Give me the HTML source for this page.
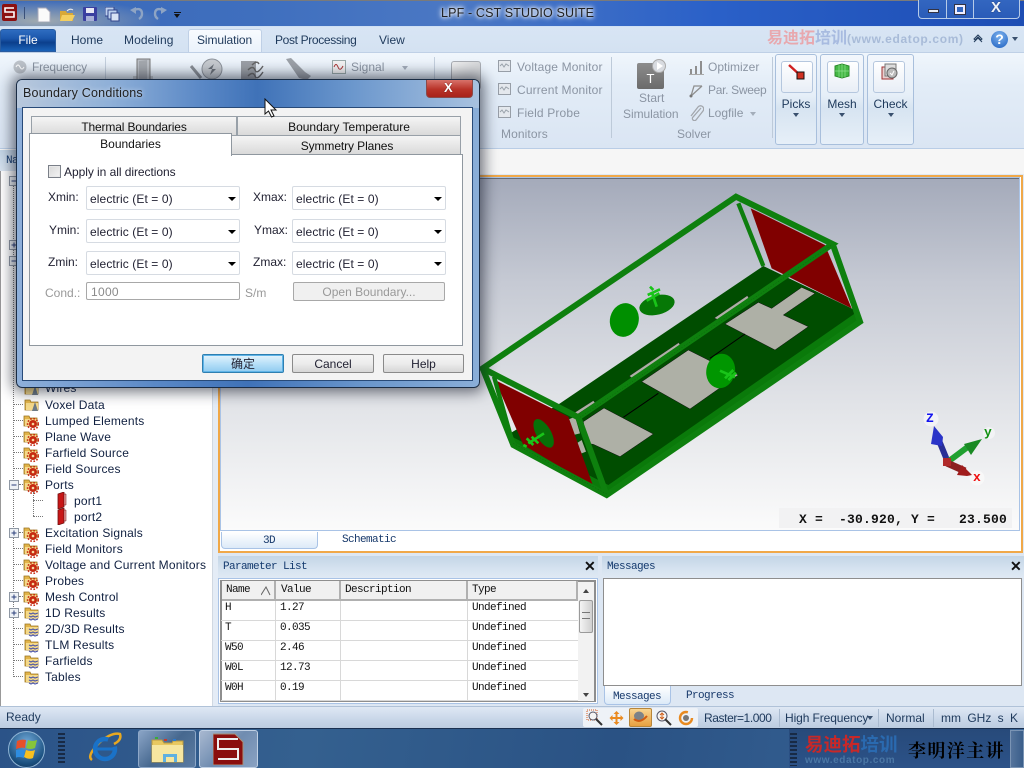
<!DOCTYPE html>
<html><head><meta charset="utf-8"><style>
html,body{margin:0;padding:0;width:1024px;height:768px;overflow:hidden;background:#fff}
body{position:relative;font-family:"Liberation Sans","Noto Sans CJK SC",sans-serif;font-size:12px;color:#111}
div,span,svg{position:absolute;box-sizing:border-box}
.t{white-space:nowrap;line-height:14px}
.g{color:#8b95a3}
.n{color:#1e395b}
.m{font-family:"Liberation Mono",monospace;font-size:11px;letter-spacing:-.6px;white-space:nowrap;line-height:12px}
.tr{white-space:nowrap;line-height:14px;left:45px;color:#102040;letter-spacing:.18px}
.cb{width:154px;height:24px;background:#fff;border:1px solid #d6dbe2;border-radius:2px}
.cb span{left:3px;top:5px;white-space:nowrap;line-height:14px;letter-spacing:.1px;color:#223}
.cb i{position:absolute;right:3px;top:10px;width:0;height:0;border:4px solid transparent;border-top:4px solid #000}
.btn{height:19px;border:1px solid #8a8a8a;border-radius:2px;background:linear-gradient(#f4f4f4,#ececec 50%,#d6d6d6);text-align:center;line-height:19px;color:#223}
.tab{border:1px solid #98a0a8;background:linear-gradient(#f5f5f5,#d8d8d8);text-align:center;color:#111;line-height:20px}
.rb{border:1px solid #a8bfdc;border-radius:3px;background:linear-gradient(#f3f7fc,#e6eff8 45%,#d7e4f1 60%,#e6eff8);top:54px;height:91px}
.rb b{position:absolute;left:5px;top:6px;width:30px;height:30px;border:1px solid #b5c7de;border-radius:3px;background:linear-gradient(#fff,#e8eef6)}
.rb span{left:0;right:0;top:42px;text-align:center;color:#1e395b;line-height:14px}
.rb i{position:absolute;left:50%;margin-left:-3px;top:58px;border:3px solid transparent;border-top:4px solid #39506e}
.hd{background:linear-gradient(#c3d5e6,#d6e3f0 60%,#dfe9f4);height:22px;top:556px}
.th{top:581px;height:20px;background:#f0f0f0;border-right:2px solid #b0b0b0;border-bottom:2px solid #b0b0b0}
.l{height:1px;background:#d8d8d8;left:221px;width:357px}
.v{width:1px;background:#d8d8d8;top:601px;height:100px}
</style></head><body>
<svg width="0" height="0" style="left:0;top:0"><defs>
<g id="fo"><path d="M1 3h5l1 2h7v8H1z" fill="#e2b44a" stroke="#9a7420" stroke-width=".8"/><path d="M2 6h12v7H2z" fill="#f4d98a"/></g>
<g id="ge"><use href="#fo"/><circle cx="10" cy="11" r="4" fill="#c62a12"/><circle cx="10" cy="11" r="5.4" fill="none" stroke="#c62a12" stroke-width="1.6" stroke-dasharray="1.6 1.6"/><circle cx="10" cy="11" r="1.3" fill="#f6d9a0"/></g>
<g id="wa"><use href="#fo"/><path d="M5 8l2 1 2-1 2 1 3-1M5 11l2 1 2-1 2 1 3-1M5 14l2 1 2-1 2 1 3-1" fill="none" stroke="#4a55a8" stroke-width="1.1"/></g>
<g id="co"><use href="#fo"/><path d="M11 5l3 9H8z" fill="#6c7a86"/></g>
<g id="po"><path d="M1 2l6-2v15l-6 2z" fill="#c81616" stroke="#701010" stroke-width=".8"/><path d="M7 2h2v11H7z" fill="#e9a0a0" stroke="#701010" stroke-width=".5"/></g>
<g id="px"><rect x=".5" y=".5" width="9" height="9" fill="#eef2f6" stroke="#8f98a4"/><path d="M2.500 5h5M5 2.500v5" stroke="#2a3f7a"/></g>
<g id="mn"><rect x=".5" y=".5" width="9" height="9" fill="#eef2f6" stroke="#8f98a4"/><path d="M2.500 5h5" stroke="#2a3f7a"/></g>
<g id="mon"><rect x=".5" y=".5" width="12" height="11" fill="#e4e8ed" stroke="#979ea7"/><path d="M2 6l2-2 2 3 2-3 3 2" fill="none" stroke="#9aa2ab"/></g>
</defs></svg>

<!-- Title bar -->
<div style="left:0;top:0;width:1024px;height:27px;background:linear-gradient(90deg,#3a68b8,#3f6fbe 25%,#4b78c4 45%,#2a60c8 70%,#1d4db4 100%);border-top:1px solid #7a7a7a;border-bottom:1px solid #cfe0f4"></div>
<div style="left:0;top:1px;width:160px;height:25px;background:radial-gradient(ellipse at 40px 20px,#a0aab0,rgba(90,130,190,0) 75%)"></div>
<svg style="left:2px;top:4px" width="15" height="17"><rect width="15" height="17" rx="2" fill="#8c1010"/><path d="M12 4H3v4h9v5H3" fill="none" stroke="#fff" stroke-width="1.6"/></svg>
<div style="left:24px;top:7px;width:1px;height:12px;background:#39507a"></div>
<svg style="left:37px;top:7px" width="14" height="15"><path d="M1 1h8l4 4v10H1z" fill="#fafafa" stroke="#aab"/></svg>
<svg style="left:59px;top:7px" width="17" height="15"><path d="M1 4h6l1 2h6v8H1z" fill="#d8a838"/><path d="M3 8h13l-3 6H1z" fill="#f4cf60"/><path d="M8 4q3-3 6-1" fill="none" stroke="#eee"/></svg>
<svg style="left:83px;top:7px" width="15" height="15"><rect width="14" height="14" rx="1" fill="#3a3fa0"/><rect x="3" y="1" width="8" height="5" fill="#e8e8f4"/><rect x="3" y="9" width="8" height="5" fill="#a8b0d8"/></svg>
<svg style="left:105px;top:7px" width="15" height="15"><rect x="0" y="0" width="9" height="9" fill="#bcd0ee" stroke="#33468c"/><rect x="3" y="3" width="9" height="9" fill="#bcd0ee" stroke="#33468c"/><rect x="6" y="6" width="8" height="8" fill="#d8e2f4" stroke="#33468c"/></svg>
<svg style="left:130px;top:6px" width="14" height="14"><path d="M4 4q8-3 8 4q0 3-3 5" fill="none" stroke="#8ea4c4" stroke-width="2.400"/><path d="M0 4l6-3v7z" fill="#8ea4c4"/></svg>
<svg style="left:153px;top:6px" width="14" height="14"><path d="M10 4q-8-3-8 4q0 3 3 5" fill="none" stroke="#8ea4c4" stroke-width="2.400"/><path d="M14 4L8 1v7z" fill="#8ea4c4"/></svg>
<div style="left:174px;top:12px;width:7px;height:1px;background:#111"></div>
<div style="left:174px;top:14px;border:3.500px solid transparent;border-top:4px solid #111"></div>
<div class="t" style="left:441px;top:6px;font-size:12.500px;color:#222;letter-spacing:.15px;text-shadow:0 0 6px #fff,0 0 6px #fff,0 0 3px #fff">LPF - CST STUDIO SUITE</div>
<div style="left:918px;top:0;width:102px;height:19px;border:1px solid #b6cbe8;border-top:0;border-radius:0 0 4px 4px;background:linear-gradient(#3366c0,#2a5cb8)"></div>
<div style="left:946px;top:0;width:1px;height:18px;background:#b6cbe8"></div><div style="left:973px;top:0;width:1px;height:18px;background:#b6cbe8"></div>
<div style="left:928px;top:9px;width:11px;height:4px;background:#e8eef8;border:1px solid #334"></div>
<div style="left:955px;top:5px;width:10px;height:9px;border:2px solid #eef;outline:1px solid #334;background:#3366c0"></div>
<div class="t" style="left:991px;top:1px;font-size:15px;font-weight:bold;color:#eef3fb;text-shadow:0 0 1px #223">X</div>

<!-- Tabs row -->
<div style="left:0;top:27px;width:1024px;height:25px;background:linear-gradient(#d8e5f4,#d4e2f2)"></div>
<div style="left:0;top:29px;width:56px;height:23px;background:linear-gradient(#2e6cc0,#1b57ac 40%,#0b3f8c 60%,#1a62b8);border:1px solid #2a5ca0;border-radius:3px 3px 0 0;color:#fff;text-align:center;line-height:21px">File</div>
<div class="t n" style="left:71px;top:33px">Home</div>
<div class="t n" style="left:124px;top:33px;letter-spacing:.1px">Modeling</div>
<div style="left:188px;top:29px;width:74px;height:24px;background:linear-gradient(#f8fbff,#eaf2fb);border:1px solid #bfd0e6;border-bottom:0;border-radius:3px 3px 0 0"></div>
<div class="t n" style="left:197px;top:33px;letter-spacing:-.1px">Simulation</div>
<div class="t n" style="left:275px;top:33px;letter-spacing:-.35px">Post Processing</div>
<div class="t n" style="left:379px;top:33px">View</div>
<div class="t" style="left:767px;top:30px;font-size:16px;font-weight:bold;color:#e8a8ae;line-height:18px;letter-spacing:0">易迪拓<span style="position:static;color:#a8bbe0">培训</span><span style="position:static;font-size:12px;color:#a8bbd8;letter-spacing:.65px">(www.edatop.com)</span></div>
<svg style="left:972px;top:33px" width="12" height="12"><path d="M2 6l4-4 4 4-1 1-3-3-3 3zM2 9l4-4 4 4" fill="none" stroke="#27405f"/></svg>
<div style="left:991px;top:31px;width:17px;height:17px;border-radius:50%;background:radial-gradient(circle at 50% 30%,#7db2ee,#1d5fc0);color:#fff;font-weight:bold;font-size:14px;line-height:17px;text-align:center">?</div>
<div style="left:1012px;top:37px;border:3px solid transparent;border-top:4px solid #39506e"></div>

<!-- Ribbon -->
<div style="left:0;top:52px;width:1024px;height:97px;background:linear-gradient(#f0f6fc,#e2ecf7 35%,#dae5f3);border-top:1px solid #bfd0e6;border-bottom:1px solid #b9cde6"></div>
<svg style="left:13px;top:60px" width="14" height="14"><circle cx="7" cy="7" r="6.500" fill="#bcc2c9"/><path d="M3 7q2-4 4 0t4 0" fill="none" stroke="#fff"/></svg>
<div class="t g" style="left:32px;top:60px;letter-spacing:-.2px">Frequency</div>
<div style="left:105px;top:57px;width:1px;height:22px;background:#c3cfdd"></div>
<svg style="left:132px;top:58px" width="22" height="22"><path d="M1 18h20v4H1z" fill="#c6cad0"/><path d="M5 1h13v21H5z" fill="#bcc0c6" stroke="#777"/><path d="M7 3l8-1v20l-8-1z" fill="#a4a8ae"/></svg>
<svg style="left:190px;top:58px" width="36" height="22"><circle cx="22" cy="11" r="10" fill="#c6cacf" stroke="#8c929a"/><path d="M1 8l10 12" stroke="#8a8f96" stroke-width="3"/><path d="M18 11l6-5-2 5 4 0-6 6 2-6z" fill="#6a7078"/></svg>
<svg style="left:240px;top:58px" width="28" height="22"><path d="M1 3h15v19H1z" fill="#9b9fa5"/><path d="M8 12q5-5 7 0t8-4M8 18q5-5 7 0t8-4M12 7q5-5 7-1" fill="none" stroke="#666" stroke-width="1.400"/></svg>
<svg style="left:285px;top:58px" width="26" height="22"><path d="M1 1l5-1 14 14 6 4-4 4-8-2z" fill="#9ca1a8"/></svg>
<svg style="left:332px;top:60px" width="14" height="14"><rect x=".5" y=".5" width="13" height="13" fill="#f3f3f3" stroke="#9aa"/><path d="M2 7q2-5 4 0t5-1" fill="none" stroke="#a33"/></svg>
<div class="t g" style="left:351px;top:60px">Signal</div>
<div style="left:402px;top:66px;border:3px solid transparent;border-top:4px solid #a3adba"></div>
<div style="left:434px;top:57px;width:1px;height:22px;background:#c3cfdd"></div>
<div style="left:451px;top:61px;width:30px;height:29px;border:1px solid #a9adb3;border-radius:3px;background:linear-gradient(135deg,#f0f0f0,#bfc2c6)"></div>
<svg style="left:498px;top:60px" width="14" height="13"><use href="#mon"/></svg>
<svg style="left:498px;top:83px" width="14" height="13"><use href="#mon"/></svg>
<svg style="left:498px;top:106px" width="16" height="15"><use href="#mon"/></svg>
<div class="t g" style="left:517px;top:60px;letter-spacing:.15px">Voltage Monitor</div>
<div class="t g" style="left:517px;top:83px;letter-spacing:.15px">Current Monitor</div>
<div class="t g" style="left:517px;top:106px;letter-spacing:.15px">Field Probe</div>
<div class="t g" style="left:501px;top:127px;letter-spacing:.1px">Monitors</div>
<div style="left:611px;top:57px;width:1px;height:81px;background:#bdcad9"></div>
<div style="left:637px;top:63px;width:27px;height:26px;border-radius:2px;background:linear-gradient(#8c8c8c,#6b6b6b);color:#fff;font-size:13px;text-align:center;line-height:32px">T</div>
<div style="left:652px;top:59px;width:14px;height:14px;border-radius:50%;background:#d8dbe0;border:1px solid #aaa"></div>
<div style="left:657px;top:62px;border:4px solid transparent;border-left:6px solid #fff"></div>
<div class="t g" style="left:639px;top:91px">Start</div>
<div class="t g" style="left:623px;top:107px;letter-spacing:-.05px">Simulation</div>
<svg style="left:689px;top:60px" width="15" height="15"><path d="M1 14h2V9H1zM6 14h2V6H6zM11 14h2V1h-2z" fill="#8f8f8f"/><path d="M0 14.500h15" stroke="#aaa"/></svg>
<svg style="left:689px;top:83px" width="15" height="15"><path d="M2 13L5 3h8M2 13L13 3" fill="none" stroke="#8f8f8f" stroke-width="1.300"/><circle cx="2" cy="13" r="1.500" fill="#777"/></svg>
<svg style="left:689px;top:105px" width="15" height="16"><path d="M12 3L4 12a2 2 0 0 0 3 3l7-9a3 3 0 0 0-5-4L2 11" fill="none" stroke="#a3a7ad" stroke-width="1.300"/></svg>
<div class="t g" style="left:708px;top:60px">Optimizer</div>
<div class="t g" style="left:708px;top:83px;letter-spacing:-.3px">Par. Sweep</div>
<div class="t g" style="left:708px;top:106px">Logfile</div>
<div style="left:750px;top:112px;border:3px solid transparent;border-top:4px solid #a3adba"></div>
<div class="t g" style="left:677px;top:127px">Solver</div>
<div style="left:772px;top:57px;width:1px;height:81px;background:#bdcad9"></div>
<div class="rb" style="left:775px;width:42px"><b></b><span>Picks</span><i></i></div>
<div class="rb" style="left:820px;width:44px"><b style="left:6px"></b><span>Mesh</span><i></i></div>
<div class="rb" style="left:867px;width:47px"><b></b><span>Check</span><i></i></div>
<svg style="left:787px;top:64px" width="18" height="16"><path d="M2 1l12 11" stroke="#d02020" stroke-width="2.400"/><rect x="10" y="8" width="7" height="7" fill="#d03020" stroke="#111"/></svg>
<svg style="left:834px;top:63px" width="16" height="16"><path d="M1 3l7-2 7 2v10l-7 2-7-2z" fill="#45b845" stroke="#2a8a2a"/><path d="M8 1v14M1 8h14M5 2v12M11 2v12" stroke="#8ee08e" stroke-width=".7"/></svg>
<svg style="left:881px;top:62px" width="18" height="18"><rect x="1" y="5" width="11" height="12" fill="#e8d0d0" stroke="#a03030"/><rect x="4" y="2" width="11" height="12" fill="#ddd" stroke="#777"/><circle cx="11" cy="11" r="5" fill="#bbb" stroke="#666"/><path d="M9 11l2 2 2-4" fill="none" stroke="#fff"/></svg>

<!-- Strip under ribbon -->
<div style="left:0;top:149px;width:1024px;height:28px;background:#f6f6f6"></div>
<div style="left:0;top:150px;width:218px;height:23px;background:linear-gradient(#c3d5e6,#dbe6f2)"></div>
<div class="m" style="left:6px;top:155px;color:#143a6e">Navigation Tree</div>

<!-- Left tree -->
<div style="left:0;top:171px;width:218px;height:535px;background:#fff;border-left:1px solid #999"></div>
<div style="left:212px;top:171px;width:6px;height:535px;background:#e4ecf6;border-left:1px solid #d0d8e2"></div>
<div style="left:13px;top:180px;width:0;height:497px;border-left:1px dotted #777"></div>
<svg style="left:9px;top:176px" width="10" height="10"><use href="#mn"/></svg>
<svg style="left:9px;top:240px" width="10" height="10"><use href="#px"/></svg>
<svg style="left:9px;top:256px" width="10" height="10"><use href="#mn"/></svg>
<svg style="left:24px;top:381px" width="16" height="16"><use href="#co"/></svg><div class="tr" style="top:381px">Wires</div>
<svg style="left:24px;top:397px" width="16" height="16"><use href="#co"/></svg><div class="tr" style="top:398px">Voxel Data</div>
<svg style="left:23px;top:413px" width="16" height="18"><use href="#ge"/></svg><div class="tr" style="top:414px">Lumped Elements</div>
<svg style="left:23px;top:429px" width="16" height="18"><use href="#ge"/></svg><div class="tr" style="top:430px">Plane Wave</div>
<svg style="left:23px;top:445px" width="16" height="18"><use href="#ge"/></svg><div class="tr" style="top:446px">Farfield Source</div>
<svg style="left:23px;top:461px" width="16" height="18"><use href="#ge"/></svg><div class="tr" style="top:462px">Field Sources</div>
<svg style="left:23px;top:477px" width="16" height="18"><use href="#ge"/></svg><div class="tr" style="top:478px">Ports</div>
<svg style="left:9px;top:480px" width="10" height="10"><use href="#mn"/></svg>
<div style="left:33px;top:492px;width:0;height:24px;border-left:1px dotted #777"></div>
<div style="left:33px;top:500px;width:10px;height:0;border-top:1px dotted #777"></div>
<div style="left:33px;top:516px;width:10px;height:0;border-top:1px dotted #777"></div>
<svg style="left:57px;top:492px" width="11" height="17"><use href="#po"/></svg><div class="tr" style="left:74px;top:494px">port1</div>
<svg style="left:57px;top:508px" width="11" height="17"><use href="#po"/></svg><div class="tr" style="left:74px;top:510px">port2</div>
<svg style="left:23px;top:525px" width="16" height="18"><use href="#ge"/></svg><div class="tr" style="top:526px">Excitation Signals</div>
<svg style="left:9px;top:528px" width="10" height="10"><use href="#px"/></svg>
<svg style="left:23px;top:541px" width="16" height="18"><use href="#ge"/></svg><div class="tr" style="top:542px">Field Monitors</div>
<svg style="left:23px;top:557px" width="16" height="18"><use href="#ge"/></svg><div class="tr" style="top:558px">Voltage and Current Monitors</div>
<svg style="left:23px;top:573px" width="16" height="18"><use href="#ge"/></svg><div class="tr" style="top:574px">Probes</div>
<svg style="left:23px;top:589px" width="16" height="18"><use href="#ge"/></svg><div class="tr" style="top:590px">Mesh Control</div>
<svg style="left:9px;top:592px" width="10" height="10"><use href="#px"/></svg>
<svg style="left:24px;top:605px" width="16" height="17"><use href="#wa"/></svg><div class="tr" style="top:606px">1D Results</div>
<svg style="left:9px;top:608px" width="10" height="10"><use href="#px"/></svg>
<svg style="left:24px;top:621px" width="16" height="17"><use href="#wa"/></svg><div class="tr" style="top:622px">2D/3D Results</div>
<svg style="left:24px;top:637px" width="16" height="17"><use href="#wa"/></svg><div class="tr" style="top:638px">TLM Results</div>
<svg style="left:24px;top:653px" width="16" height="17"><use href="#wa"/></svg><div class="tr" style="top:654px">Farfields</div>
<svg style="left:24px;top:669px" width="16" height="17"><use href="#wa"/></svg><div class="tr" style="top:670px">Tables</div>
<div style="left:14px;top:404px;width:9px;border-top:1px dotted #777"></div><div style="left:14px;top:420px;width:9px;border-top:1px dotted #777"></div><div style="left:14px;top:436px;width:9px;border-top:1px dotted #777"></div><div style="left:14px;top:452px;width:9px;border-top:1px dotted #777"></div><div style="left:14px;top:468px;width:9px;border-top:1px dotted #777"></div><div style="left:19px;top:484px;width:4px;border-top:1px dotted #777"></div><div style="left:19px;top:532px;width:4px;border-top:1px dotted #777"></div><div style="left:14px;top:548px;width:9px;border-top:1px dotted #777"></div><div style="left:14px;top:564px;width:9px;border-top:1px dotted #777"></div><div style="left:14px;top:580px;width:9px;border-top:1px dotted #777"></div><div style="left:19px;top:596px;width:4px;border-top:1px dotted #777"></div><div style="left:19px;top:612px;width:4px;border-top:1px dotted #777"></div><div style="left:14px;top:628px;width:9px;border-top:1px dotted #777"></div><div style="left:14px;top:644px;width:9px;border-top:1px dotted #777"></div><div style="left:14px;top:660px;width:9px;border-top:1px dotted #777"></div><div style="left:14px;top:676px;width:9px;border-top:1px dotted #777"></div>

<!-- Viewport frame -->
<div style="left:218px;top:174px;width:806px;height:382px;background:#dfe9f4"></div>
<div style="left:218px;top:175px;width:805px;height:378px;border:2px solid #f0a848;background:#fff"></div>
<div style="left:220px;top:177px;width:800px;height:354px;border:1px solid #a9c3e6;background:linear-gradient(#a4aaba,#c6cad4 30%,#e2e4e8 65%,#fbfbfb)"></div>
<div style="left:221px;top:178px;width:798px;height:1px;background:#666c78"></div>

<!-- 3D model -->
<svg style="left:480px;top:180px" width="400" height="320" viewBox="0 0 1200 960">
<polygon points="240,670 850,258 1125,390 1130,420 385,925 95,795 90,760" fill="#004d00"/>
<polygon points="95,770 95,795 380,950 1145,425 1125,400 385,915" fill="#0a7a0a"/>
<polygon points="735,432 835,367 875,385 965,322 1005,340 910,405 985,440 885,510" fill="#aeb0a6" stroke="#111" stroke-width="1.500"/>
<polygon points="485,605 625,510 775,585 630,687" fill="#aeb0a6" stroke="#111" stroke-width="1.500"/>
<polygon points="310,725 372,684 520,762 420,830 340,793 320,790" fill="#aeb0a6" stroke="#111" stroke-width="1.500"/>
<polygon points="262,720 285,710 300,760 280,765" fill="#aeb0a6"/><polygon points="290,790 305,780 318,815 305,820" fill="#aeb0a6"/>
<polygon points="285,697 340,662 345,668 292,703" fill="#aeb0a6" stroke="#111"/>
<polygon points="448,588 596,488 600,494 456,594" fill="#aeb0a6" stroke="#111"/>
<polygon points="703,414 802,347 806,354 712,418" fill="#aeb0a6" stroke="#111"/>
<path d="M430,712L535,640M690,535L795,462" stroke="#000" stroke-width="3"/>
<polygon points="812,85 1035,195 1115,385 875,265" fill="#800000"/>
<polygon points="45,600 265,710 340,920 130,795" fill="#800000"/>
<ellipse cx="433" cy="420" rx="43" ry="51" transform="rotate(15 433 420)" fill="#008f00"/>
<ellipse cx="531" cy="375" rx="54" ry="29" transform="rotate(-14 531 375)" fill="#067806"/>
<ellipse cx="722" cy="573" rx="43" ry="52" transform="rotate(12 722 573)" fill="#009600"/>
<ellipse cx="191" cy="760" rx="22" ry="48" transform="rotate(-30 191 760)" fill="#087008"/>
<g stroke="#19c419" stroke-width="8" fill="none">
<path d="M515,335L530,380M503,345L540,328M500,362L538,340M510,320L520,330"/>
<path d="M720,572L765,592M735,595L760,570M745,600L768,578"/>
<path d="M145,790L192,760M140,775L160,795M155,770L175,790M130,795L140,800"/></g>
<g fill="none" stroke="#0e7e0e" stroke-width="13">
<path d="M42,590L97,785M775,70L850,258"/></g>
<g fill="none" stroke="#0e800e" stroke-width="18" stroke-linejoin="miter">
<path d="M8,565L768,50L1058,192L295,712Z"/>
<path d="M8,565L100,795L380,945L1140,425L1058,192"/>
<path d="M295,712L380,945"/>
</g>
<g fill="none" stroke="#0a4a0a" stroke-width="1.500" stroke-dasharray="4 5" opacity=".6">
<path d="M300,712L1055,195M100,790L380,942"/></g>
</svg>
<!-- triad -->
<svg style="left:905px;top:405px" width="90" height="90" viewBox="0 0 90 90">
<circle cx="26" cy="14" r="7.500" fill="#f2f3f5"/><circle cx="84" cy="28" r="6" fill="#f2f3f5"/><circle cx="72" cy="73" r="7.500" fill="#f8f8f8"/>
<path d="M42,55L33,33" stroke="#2a2f96" stroke-width="6"/><polygon points="29,21 38,32 37,41 26,39" fill="#2a34c8"/>
<path d="M44,56L64,41" stroke="#20a030" stroke-width="6"/><polygon points="77,34 59,39 66,50" fill="#1a8a24"/>
<path d="M42,58L60,66" stroke="#8c2020" stroke-width="7"/><polygon points="67,70 57,60 52,70 62,71" fill="#a01c1c"/>
<rect x="38" y="53" width="8" height="8" fill="#b02a2a"/>
</svg>
<div class="t" style="left:926px;top:412px;font-family:'Liberation Mono';font-size:13px;font-weight:bold;color:#1414f0">Z</div>
<div class="t" style="left:984px;top:426px;font-family:'Liberation Mono';font-size:13px;font-weight:bold;color:#109010">y</div>
<div class="t" style="left:973px;top:471px;font-family:'Liberation Mono';font-size:13px;font-weight:bold;color:#f01010">x</div>
<div style="left:779px;top:508px;width:233px;height:20px;background:#f2f2f3"></div>
<div class="t" style="left:799px;top:513px;font-family:'Liberation Mono';font-size:13px;font-weight:bold;white-space:pre;letter-spacing:.2px;color:#111">X =  -30.920, Y =   23.500</div>

<!-- 3D tab row -->
<div style="left:221px;top:532px;width:97px;height:17px;border:1px solid #a9c3e6;border-top:0;border-radius:0 0 4px 4px;background:linear-gradient(#fff,#dceaf8)"></div>
<div class="m" style="left:263px;top:535px;color:#17396b">3D</div>
<div class="m" style="left:342px;top:534px;color:#17396b">Schematic</div>

<!-- Parameter list -->
<div style="left:218px;top:553px;width:806px;height:153px;background:#dde7f3"></div>
<div class="hd" style="left:218px;width:380px"></div>
<div class="m" style="left:223px;top:561px;color:#143a6e">Parameter List</div>
<div class="t" style="left:584px;top:559px;font-size:14px;font-weight:bold;color:#111">✕</div>
<div style="left:218px;top:578px;width:380px;height:126px;border:1px solid #a9c3e6;background:#fff"></div>
<div style="left:220px;top:580px;width:376px;height:122px;border:2px solid #8e8e8e;background:#fff"></div>
<div class="th" style="left:222px;width:54px"></div><div class="th" style="left:276px;width:65px"></div><div class="th" style="left:341px;width:127px"></div><div class="th" style="left:468px;width:110px"></div>
<div class="m" style="left:226px;top:584px">Name</div><div class="m" style="left:281px;top:584px">Value</div><div class="m" style="left:345px;top:584px">Description</div><div class="m" style="left:472px;top:584px">Type</div>
<svg style="left:261px;top:586px" width="10" height="10"><path d="M0 9L5 1l4 8" fill="none" stroke="#666"/></svg>
<div class="l" style="top:620px"></div><div class="l" style="top:640px"></div><div class="l" style="top:660px"></div><div class="l" style="top:680px"></div><div class="l" style="top:700px"></div>
<div class="v" style="left:275px"></div><div class="v" style="left:340px"></div><div class="v" style="left:467px"></div>
<div class="m" style="left:225px;top:602px">H</div><div class="m" style="left:280px;top:602px">1.27</div><div class="m" style="left:472px;top:602px">Undefined</div>
<div class="m" style="left:225px;top:622px">T</div><div class="m" style="left:280px;top:622px">0.035</div><div class="m" style="left:472px;top:622px">Undefined</div>
<div class="m" style="left:225px;top:642px">W50</div><div class="m" style="left:280px;top:642px">2.46</div><div class="m" style="left:472px;top:642px">Undefined</div>
<div class="m" style="left:225px;top:662px">W0L</div><div class="m" style="left:280px;top:662px">12.73</div><div class="m" style="left:472px;top:662px">Undefined</div>
<div class="m" style="left:225px;top:682px">W0H</div><div class="m" style="left:280px;top:682px">0.19</div><div class="m" style="left:472px;top:682px">Undefined</div>
<div style="left:578px;top:582px;width:16px;height:119px;background:#f2f2f2"></div>
<div style="left:579px;top:600px;width:14px;height:33px;border:1px solid #9a9a9a;border-radius:2px;background:linear-gradient(90deg,#f4f4f4,#cfcfcf)"></div>
<div style="left:582px;top:612px;width:8px;height:7px;border-top:1px solid #777;border-bottom:1px solid #777"></div>
<div style="left:583px;top:586px;border:3.500px solid transparent;border-bottom:4px solid #444"></div>
<div style="left:583px;top:693px;border:3.500px solid transparent;border-top:4px solid #444"></div>

<!-- Messages -->
<div class="hd" style="left:602px;width:422px"></div>
<div style="left:598px;top:553px;width:4px;height:153px;background:#dde7f3"></div>
<div class="m" style="left:607px;top:561px;color:#143a6e">Messages</div>
<div class="t" style="left:1010px;top:559px;font-size:14px;font-weight:bold;color:#111">✕</div>
<div style="left:603px;top:578px;width:419px;height:108px;border:1px solid #8e8e8e;background:#fff"></div>
<div style="left:604px;top:686px;width:67px;height:19px;border:1px solid #a9c3e6;border-top:0;border-radius:0 0 4px 4px;background:linear-gradient(#fff,#dceaf8)"></div>
<div class="m" style="left:613px;top:691px;color:#17396b">Messages</div>
<div class="m" style="left:686px;top:690px;color:#17396b">Progress</div>

<!-- Status bar -->
<div style="left:0;top:706px;width:1024px;height:23px;background:linear-gradient(#dfe8f4,#c8d6e8 60%,#bccce0);border-top:1px solid #b0c2d8;border-bottom:1px solid #1a3050"></div>
<div class="t" style="left:6px;top:710px;color:#1e395b">Ready</div>
<div style="left:583px;top:708px;width:115px;height:19px;background:#eef2f7;border-radius:2px"></div>
<svg style="left:586px;top:709px" width="17" height="17"><rect x="1" y="1" width="10" height="10" fill="none" stroke="#d45a20" stroke-dasharray="1 1"/><circle cx="7" cy="7" r="4" fill="#f4f4f4" stroke="#556"/><path d="M10 10l6 6" stroke="#333" stroke-width="2"/></svg>
<svg style="left:608px;top:710px" width="17" height="16"><path d="M8.500 1l3 3h-2v3h3V5l3 3-3 3V9h-3v3h2l-3 3-3-3h2V9h-3v2l-3-3 3-3v2h3V4h-2z" fill="#ea8a20"/></svg>
<div style="left:629px;top:708px;width:23px;height:19px;background:linear-gradient(#f8d490,#e8a040);border:1px solid #b8863a;border-radius:2px"></div>
<svg style="left:632px;top:710px" width="17" height="15"><ellipse cx="7" cy="6" rx="5" ry="4.500" fill="#7d8288"/><path d="M2 9q6 5 13-3" fill="none" stroke="#d05a10" stroke-width="2"/></svg>
<svg style="left:655px;top:709px" width="17" height="17"><circle cx="7" cy="7" r="5" fill="#f6f6f6" stroke="#556"/><path d="M7 4v6M5 6l2-2 2 2M5 8l2 2 2-2" fill="none" stroke="#d0601a"/><path d="M10 10l6 6" stroke="#333" stroke-width="2"/></svg>
<svg style="left:678px;top:710px" width="17" height="16"><circle cx="8" cy="8" r="6" fill="none" stroke="#e88a20" stroke-width="2.400" stroke-dasharray="30 8"/><circle cx="8" cy="8" r="3" fill="#777"/></svg>
<div class="t n" style="left:704px;top:711px;letter-spacing:-.4px">Raster=1.000</div>
<div style="left:779px;top:709px;width:1px;height:18px;background:#aabbd0"></div>
<div class="t n" style="left:785px;top:711px;letter-spacing:-.1px">High Frequency</div>
<div style="left:867px;top:716px;border:3.500px solid transparent;border-top:4px solid #39506e"></div>
<div style="left:878px;top:709px;width:1px;height:18px;background:#aabbd0"></div>
<div class="t n" style="left:886px;top:711px">Normal</div>
<div style="left:933px;top:709px;width:1px;height:18px;background:#aabbd0"></div>
<div class="t n" style="left:941px;top:711px;word-spacing:3px">mm GHz s K</div>

<!-- Taskbar -->
<div style="left:0;top:729px;width:1024px;height:39px;background:linear-gradient(100deg,#2b5388,#34608f 30%,#2a5284 60%,#3a6698);"></div>
<div style="left:789px;top:729px;width:221px;height:39px;background:linear-gradient(#274a7a,#2c5288)"></div>
<div style="left:790px;top:733px;width:7px;height:33px;background:repeating-linear-gradient(#182a45 0 2px,rgba(0,0,0,0) 2px 4px)"></div>
<div style="left:58px;top:733px;width:7px;height:31px;background:repeating-linear-gradient(#182a45 0 2px,rgba(0,0,0,0) 2px 4px)"></div>
<div style="left:8px;top:731px;width:37px;height:37px;border-radius:50%;background:radial-gradient(circle at 50% 30%,#6fa8d8,#1a4f7e 70%,#0f2e50);border:1px solid #8fb4d4"></div>
<svg style="left:16px;top:738px" width="23" height="22"><path d="M1 3q4-2 9-1l-1 8q-4-1-9 1z" fill="#e8502a"/><path d="M12 2q4 2 9 0l-2 8q-5 2-9 0z" fill="#86c53a"/><path d="M0 12q4-1 9 0l-1 8q-5-2-9 0z" fill="#2e8de0"/><path d="M10 12q5 2 9 0l-2 8q-4 2-9-1z" fill="#f8c020"/></svg>
<svg style="left:88px;top:732px" width="34" height="34"><path d="M4 28q-6-4 8-18Q24 0 32 2q2 6-6 10" fill="none" stroke="#e8a820" stroke-width="2.500"/><circle cx="17" cy="17" r="10" fill="none" stroke="#1a72c8" stroke-width="4.500" stroke-dasharray="50 10"/><path d="M8 17h18" stroke="#1a72c8" stroke-width="3"/></svg>
<div style="left:138px;top:730px;width:58px;height:38px;border:1px solid #8ea8c8;border-radius:3px;background:linear-gradient(135deg,#8aa4c6,#46688f 50%,#5c7ca2)"></div>
<svg style="left:150px;top:734px" width="36" height="32"><path d="M2 6h10l2 3h8l1-2h10v21H2z" fill="#e8c860" stroke="#b89a40"/><path d="M2 11h31v17H2z" fill="#f6e6a0"/><path d="M13 28v-8h14v8h-3v-5h-8v5z" fill="#5fb0e0"/><rect x="5" y="3" width="3" height="2" fill="#3aaa3a"/><rect x="14" y="5" width="3" height="2" fill="#c83a2a"/><rect x="23" y="5" width="3" height="2" fill="#2a7ad0"/></svg>
<div style="left:199px;top:730px;width:59px;height:38px;border:1px solid #c0d0e4;border-radius:3px;background:linear-gradient(135deg,#a8b8d0,#6f8cb0 50%,#8aa2c2)"></div>
<svg style="left:213px;top:733px" width="31" height="32"><path d="M0 1h22l8 8v23H0z" fill="#8a0e0e" stroke="#a89078"/><path d="M25 6H5v10h20v10H5" fill="none" stroke="#eee" stroke-width="2"/></svg>
<div class="t" style="left:805px;top:734px;font-size:18.500px;font-weight:bold;color:#c82828;line-height:21px">易迪拓<span style="position:static;color:#2a6ab0">培训</span></div>
<div class="t" style="left:805px;top:756px;font-size:10px;font-weight:bold;color:#4a76a4;line-height:10px;letter-spacing:.6px">www.edatop.com</div>
<div class="t" style="left:908px;top:740px;font-size:18px;font-weight:bold;color:#000;line-height:22px;letter-spacing:1.400px;font-family:'Liberation Serif','Noto Serif CJK SC',serif">李明洋主讲</div>
<div style="left:1010px;top:730px;width:14px;height:38px;border:1px solid #7a94b4;background:linear-gradient(90deg,#55749c,#3a5e8a)"></div>

<!-- Dialog -->
<div style="left:16px;top:79px;width:464px;height:309px;border-radius:6px;border:1px solid #1a2c44;background:linear-gradient(90deg,#8fb0da,#5a88c6 30%,#3f72b8 50%,#6a96cc 75%,#8aaed8);box-shadow:0 0 14px 4px rgba(20,25,40,.6)"></div>
<div style="left:17px;top:80px;width:462px;height:28px;border-radius:5px 5px 0 0;background:linear-gradient(90deg,#b8c8dc,#8fb0d8 20%,#5a88c6 40%,#3f72b8 52%,#6a96cc 72%,#a8c2e0)"></div>
<div class="t" style="left:23px;top:86px;font-size:12.500px;color:#222;letter-spacing:.2px;text-shadow:0 0 5px #dfe8f5">Boundary Conditions</div>
<div style="left:426px;top:80px;width:47px;height:18px;border:1px solid #8a4a4a;border-top:0;border-radius:0 0 4px 4px;background:linear-gradient(#d8726a,#b83228 55%,#a8221a)"></div>
<div class="t" style="left:444px;top:81px;font-size:13px;font-weight:bold;color:#fff;text-shadow:0 0 1px #400">X</div>
<div style="left:22px;top:107px;width:451px;height:274px;border:1px solid #284a78;background:#f3f3f3"></div>
<div class="tab" style="left:31px;top:116px;width:206px;height:21px;letter-spacing:-.15px">Thermal Boundaries</div>
<div class="tab" style="left:237px;top:116px;width:224px;height:21px">Boundary Temperature</div>
<div class="tab" style="left:231px;top:135px;width:230px;height:21px;padding-left:2px;letter-spacing:-.1px">Symmetry Planes</div>
<div style="left:29px;top:154px;width:434px;height:192px;border:1px solid #8f979f;background:#fff"></div>
<div style="left:29px;top:133px;width:203px;height:23px;background:#fff;border:1px solid #8f979f;border-bottom:0;text-align:center;line-height:20px;color:#111">Boundaries</div>
<div style="left:48px;top:165px;width:13px;height:13px;border:1px solid #7a7f88;background:linear-gradient(135deg,#d8d8d8,#f4f4f4);box-shadow:inset 0 0 0 1px #e8e8e8"></div>
<div class="t" style="left:64px;top:165px;letter-spacing:-.05px;color:#223">Apply in all directions</div>
<div class="t" style="left:48px;top:190px;color:#223">Xmin:</div><div class="t" style="left:49px;top:223px;color:#223">Ymin:</div><div class="t" style="left:48px;top:255px;color:#223">Zmin:</div>
<div class="t" style="left:253px;top:190px;color:#223">Xmax:</div><div class="t" style="left:254px;top:223px;color:#223">Ymax:</div><div class="t" style="left:253px;top:255px;color:#223">Zmax:</div>
<div class="cb" style="left:86px;top:186px"><span>electric (Et = 0)</span><i></i></div>
<div class="cb" style="left:292px;top:186px"><span>electric (Et = 0)</span><i></i></div>
<div class="cb" style="left:86px;top:219px"><span>electric (Et = 0)</span><i></i></div>
<div class="cb" style="left:292px;top:219px"><span>electric (Et = 0)</span><i></i></div>
<div class="cb" style="left:86px;top:251px"><span>electric (Et = 0)</span><i></i></div>
<div class="cb" style="left:292px;top:251px"><span>electric (Et = 0)</span><i></i></div>
<div class="t" style="left:45px;top:286px;color:#999">Cond.:</div>
<div style="left:86px;top:282px;width:154px;height:18px;border:1px solid #a8a8a8;border-radius:2px;background:#fff"></div>
<div class="t" style="left:91px;top:285px;color:#8a8a8a;letter-spacing:.3px">1000</div>
<div class="t" style="left:245px;top:286px;color:#999">S/m</div>
<div class="btn" style="left:293px;top:282px;width:152px;color:#999;background:#f0f0f0;border-color:#a8a8a8">Open Boundary...</div>
<div class="btn" style="left:202px;top:354px;width:82px;border-color:#2f7fb0;background:linear-gradient(#e6f4fc,#b8e0f8 50%,#90cbf0);box-shadow:inset 0 0 0 1px #5fb4e8">确定</div>
<div class="btn" style="left:292px;top:354px;width:82px">Cancel</div>
<div class="btn" style="left:383px;top:354px;width:81px">Help</div>

<!-- Cursor -->
<svg style="left:264px;top:98px" width="14" height="20"><path d="M1 1v15l3.500-3 3 6 2.500-1-3-6h5z" fill="#fff" stroke="#111"/></svg>
</body></html>
